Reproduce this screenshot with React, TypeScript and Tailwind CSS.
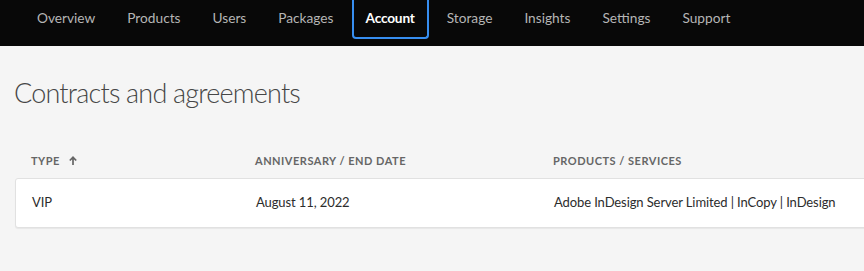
import React from "react";

const tabs = ["Overview", "Products", "Users", "Packages", "Account", "Storage", "Insights", "Settings", "Support"];

export default function App() {
  return (
    <div className="w-[864px] h-[271px] overflow-hidden bg-[#f5f5f5]" style={{ fontFamily: 'Lato, "Open Sans", sans-serif' }}>
      <nav className="h-[46px] bg-[#080808] flex items-start pl-[23px] gap-[4px]">
        {tabs.map((t) => {
          const active = t === "Account";
          return (
            <div
              key={t}
              className={
                "h-[39px] px-[12px] flex items-center text-[13.7px] border-2 border-t-0 rounded-b-[4px] " +
                (active ? "border-[#378ef0] text-white font-bold tracking-[-0.2px]" : "border-transparent text-[#b5b5b5]")
              }
            >
              {t}
            </div>
          );
        })}
      </nav>
      <div className="pl-[14px]">
        <h1 className="mt-[29px] text-[27px] font-light text-[#464646] leading-[36px] tracking-[-0.8px]">Contracts and agreements</h1>
        <div className="mt-[33px] flex h-[34px] items-center pl-[17px] text-[11px] font-bold text-[#666666] tracking-[0.5px]">
          <div className="w-[224px] shrink-0 flex items-center gap-[8px]">
            TYPE
            <svg width="10" height="10" viewBox="0 0 10 10" fill="none" stroke="#666666" strokeWidth="1.7">
              <path d="M5 9V1.5M1.8 4.5L5 1.3L8.2 4.5" />
            </svg>
          </div>
          <div className="w-[298px] shrink-0">ANNIVERSARY / END DATE</div>
          <div className="shrink-0">PRODUCTS / SERVICES</div>
        </div>
        <div className="ml-[1px] w-[900px] h-[50px] bg-white border border-[#e1e1e1] rounded-l-[3px] shadow-[0_1px_1px_rgba(0,0,0,0.06)] flex items-center pl-[16px] text-[13px] text-[#2c2c2c] tracking-[-0.1px]">
          <div className="w-[224px] shrink-0">VIP</div>
          <div className="w-[298px] shrink-0">August 11, 2022</div>
          <div className="shrink-0 whitespace-nowrap">Adobe InDesign Server Limited | InCopy | InDesign</div>
        </div>
      </div>
    </div>
  );
}
